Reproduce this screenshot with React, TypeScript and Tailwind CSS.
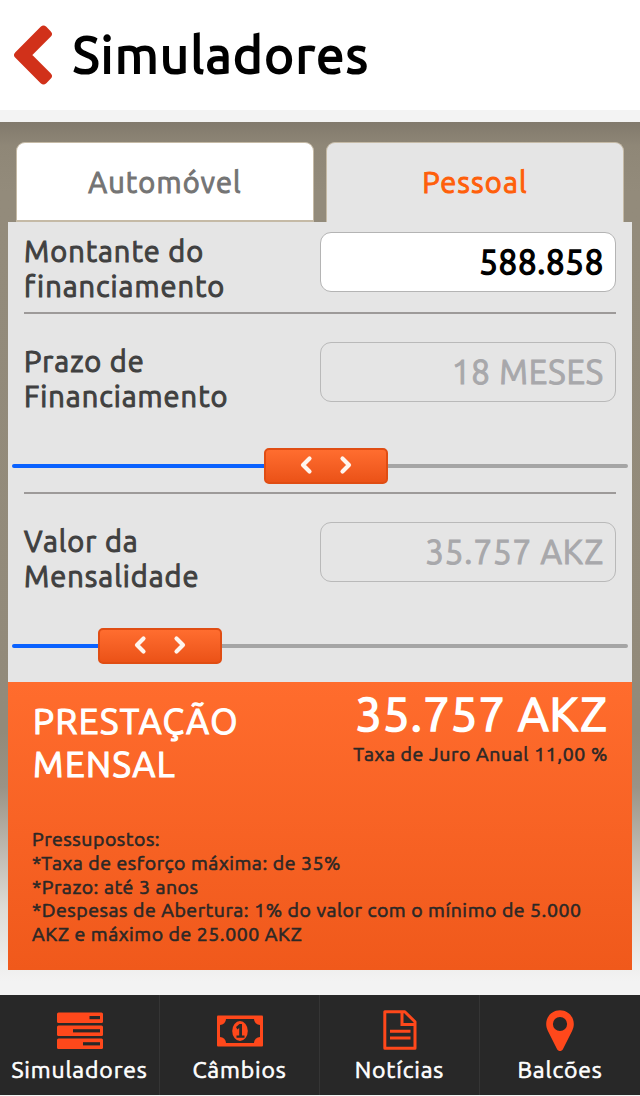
import React, { useState } from 'react';

interface SliderProps {
    value: number;
}

interface FieldProps {
    label: string[];
    value: string;
    disabled?: boolean;
}

interface NavItemProps {
    label: string;
    children: React.ReactNode;
}

const TRACK_WIDTH = 616;
const THUMB_WIDTH = 124;

const BackIcon = () => (
    <svg width="38" height="60" viewBox="0 0 38 60">
        <path
            d="M4.200 30 29.500 4.700l4.300 4.300L12.800 30l21 21-4.300 4.300Z"
            fill="#d1311a"
            stroke="#d1311a"
            strokeWidth="8"
            strokeLinejoin="round"
        />
    </svg>
);

const ThumbArrow: React.FC<{ d: string }> = ({ d }) => (
    <svg width="14" height="20" viewBox="0 0 14 20" fill="none">
        <path d={d} stroke="#fff5ee" strokeWidth="4.200" strokeLinecap="round" strokeLinejoin="round" />
    </svg>
);

const Slider: React.FC<SliderProps> = ({ value }) => {
    const left = value * (TRACK_WIDTH - THUMB_WIDTH);

    return (
        <div className="mx-1 flex h-9 items-center">
            <div className="h-1 rounded-l-full bg-[#0a62ff]" style={{ width: left }} />
            <div className="flex h-9 w-[124px] shrink-0 items-center justify-center gap-[26px] rounded-[5px] border-2 border-[#e04d13] bg-linear-to-b from-[#ff6d2f] to-[#eb5217] pb-0.5">
                <ThumbArrow d="M10.500 3.500 4 10l6.500 6.500" />
                <ThumbArrow d="m3.500 3.500 6.500 6.500-6.500 6.500" />
            </div>
            <div className="h-1 flex-1 rounded-r-full bg-[#a5a5a5]" />
        </div>
    );
};

const Field: React.FC<FieldProps> = ({ label, value, disabled }) => {
    return (
        <div className="flex justify-between px-4">
            <label className="pt-0.5 text-[29px] leading-[35px] tracking-[0.98px] text-[#404040] [-webkit-text-stroke:1px]">
                {label.map((line) => (
                    <span key={line} className="block whitespace-nowrap">{line}</span>
                ))}
            </label>
            <input
                readOnly
                value={value}
                disabled={disabled}
                className={`h-[60px] w-[296px] rounded-[11px] border pr-[11px] pb-0.5 pl-3 text-right text-[33px] ${
                    disabled
                        ? 'border-[#b9b9b9] bg-transparent tracking-[0.9px] text-[#a8a8ab] [-webkit-text-stroke:1px]'
                        : 'border-[#b4b4b4] bg-white tracking-[0.7px] text-black [-webkit-text-stroke:1.4px]'
                }`}
            />
        </div>
    );
};

const NavItem: React.FC<NavItemProps> = ({ label, children }) => (
    <a className="flex flex-col items-center border-r border-[#353535] pt-3 last:border-r-0">
        <span className="flex h-12 items-center">{children}</span>
        <span className="text-[23px] leading-[30px] tracking-[0.85px] whitespace-nowrap text-white [-webkit-text-stroke:0.6px]">{label}</span>
    </a>
);

const App: React.FC = () => {
    const [tab, setTab] = useState('Pessoal');

    const tabClass = (name: string) =>
        tab === name ? 'bg-[#e5e5e5] text-[#ff5f0a] border-b-0' : 'bg-white text-[#747474] border-b-2 pt-0.5';

    return (
        <div className="flex h-[1096px] w-[640px] flex-col overflow-hidden bg-[#f3f3f3] font-['Ubuntu','Noto_Sans',sans-serif]">
            <header className="flex h-[110px] shrink-0 items-center gap-5 bg-white pl-3.5">
                <BackIcon />
                <h1 className="pb-0.5 pl-px text-[50px] leading-none tracking-[1.9px] text-black [-webkit-text-stroke:2.2px]">Simuladores</h1>
            </header>

            <main className="mt-3 h-[873px] shrink-0 bg-[linear-gradient(180deg,#81796c_0px,#8f8777_24px,#938b7b_70px,#928a7a_610px,#9a9386_665px,#b9b4ab_720px,#dddbd6_785px,#f3f3f3_860px)] px-2 pt-5">
                <nav className="flex h-20 gap-3 px-2">
                    {['Automóvel', 'Pessoal'].map((name) => (
                        <button
                            key={name}
                            onClick={() => setTab(name)}
                            className={`h-20 flex-1 rounded-t-[9px] border border-[#c5baa6] text-[29px] tracking-[1.15px] [-webkit-text-stroke:1px] ${tabClass(name)}`}
                        >
                            {name}
                        </button>
                    ))}
                </nav>

                <section className="h-[460px] bg-[#e5e5e5]">
                    <div className="h-[90px] pt-2.5">
                        <Field label={['Montante do', 'financiamento']} value="588.858" />
                    </div>
                    <hr className="mx-4 border-t-2 border-[#9d9a99]" />
                    <div className="h-[178px] pt-7">
                        <Field label={['Prazo de', 'Financiamento']} value="18 MESES" disabled />
                        <div className="pt-[34px]">
                            <Slider value={252 / 492} />
                        </div>
                    </div>
                    <hr className="mx-4 border-t-2 border-[#9d9a99]" />
                    <div className="pt-7">
                        <Field label={['Valor da', 'Mensalidade']} value="35.757 AKZ" disabled />
                        <div className="pt-[34px]">
                            <Slider value={86 / 492} />
                        </div>
                    </div>
                </section>

                <section className="h-72 bg-linear-to-b from-[#ff6c2d] to-[#f0591b] px-6 text-[#2b2826]">
                    <div className="flex h-[145px] justify-between">
                        <h2 className="pt-[18px] pl-px text-[35px] leading-[43px] tracking-[1.5px] text-white [-webkit-text-stroke:1.2px]">
                            PRESTAÇÃO<br />MENSAL
                        </h2>
                        <div className="flex flex-col items-end pt-1.5">
                            <strong className="text-[47px] leading-[52px] font-normal tracking-[1.1px] text-white [-webkit-text-stroke:1.7px]">
                                35.757 AKZ
                            </strong>
                            <span className="text-[19.5px] leading-7 tracking-[0.6px] [-webkit-text-stroke:0.6px]">Taxa de Juro Anual 11,00 %</span>
                        </div>
                    </div>
                    <div className="pt-px text-[19.5px] leading-[23.8px] tracking-[0.52px] whitespace-nowrap [-webkit-text-stroke:0.6px]">
                        <p>Pressupostos:</p>
                        <p>*Taxa de esforço máxima: de 35%</p>
                        <p>*Prazo: até 3 anos</p>
                        <p>*Despesas de Abertura: 1% do valor com o mínimo de 5.000</p>
                        <p>AKZ e máximo de 25.000 AKZ</p>
                    </div>
                </section>
            </main>

            <footer className="grid h-[100px] shrink-0 grid-cols-4 bg-[#282828]">
                <NavItem label="Simuladores">
                    <svg width="46" height="38" viewBox="0 0 46 38">
                        <g fill="#ff481b">
                            <rect width="46" height="10.400" y="0.500" rx="1.500" />
                            <rect width="46" height="10.400" y="13.500" rx="1.500" />
                            <rect width="46" height="10.400" y="26.600" rx="1.500" />
                        </g>
                        <g fill="#282828">
                            <rect x="32.500" y="4" width="10.500" height="3.200" />
                            <rect x="16" y="17.200" width="27" height="3.200" />
                            <rect x="26" y="30.200" width="17" height="3.200" />
                        </g>
                    </svg>
                </NavItem>
                <NavItem label="Câmbios">
                    <svg width="46" height="32" viewBox="0 0 46 32">
                        <rect width="46" height="31" y="0.500" rx="1" fill="#ff481b" />
                        <path d="M9 4h28a6 6 0 0 0 6 6v12a6 6 0 0 0-6 6H9a6 6 0 0 0-6-6V10a6 6 0 0 0 6-6Z" fill="#282828" />
                        <ellipse cx="23" cy="16" rx="7.800" ry="10" fill="#ff481b" />
                        <path d="m19 12 3.500-3H25v11.500h2.500v2.300h-8v-2.300h2.700v-7.500L20.300 14.500Z" fill="#282828" />
                    </svg>
                </NavItem>
                <NavItem label="Notícias">
                    <svg width="34" height="42" viewBox="0 0 34 42" fill="none" stroke="#ff481b" strokeWidth="3">
                        <path d="M1.800 1.800h20L32 11.800v26.500H1.800Z" strokeLinejoin="round" />
                        <path d="M19 1.800V14.500h13M7 21.300h20.500M7 28h20.500" />
                    </svg>
                </NavItem>
                <NavItem label="Balcões">
                    <svg width="28" height="42" viewBox="0 0 28 42">
                        <path
                            d="M14 .2C6.200.2.200 6.300.200 14c0 2.500.6 4.500 1.600 6.700l9.300 18.600c1.200 2.400 4.600 2.400 5.800 0l9.300-18.600c1-2.200 1.600-4.200 1.600-6.700C27.800 6.300 21.800.2 14 .2Zm0 6.700a7.100 7.100 0 1 1 0 14.200 7.100 7.100 0 0 1 0-14.200Z"
                            fill="#ff481b"
                        />
                    </svg>
                </NavItem>
            </footer>
        </div>
    );
};

export default App;
